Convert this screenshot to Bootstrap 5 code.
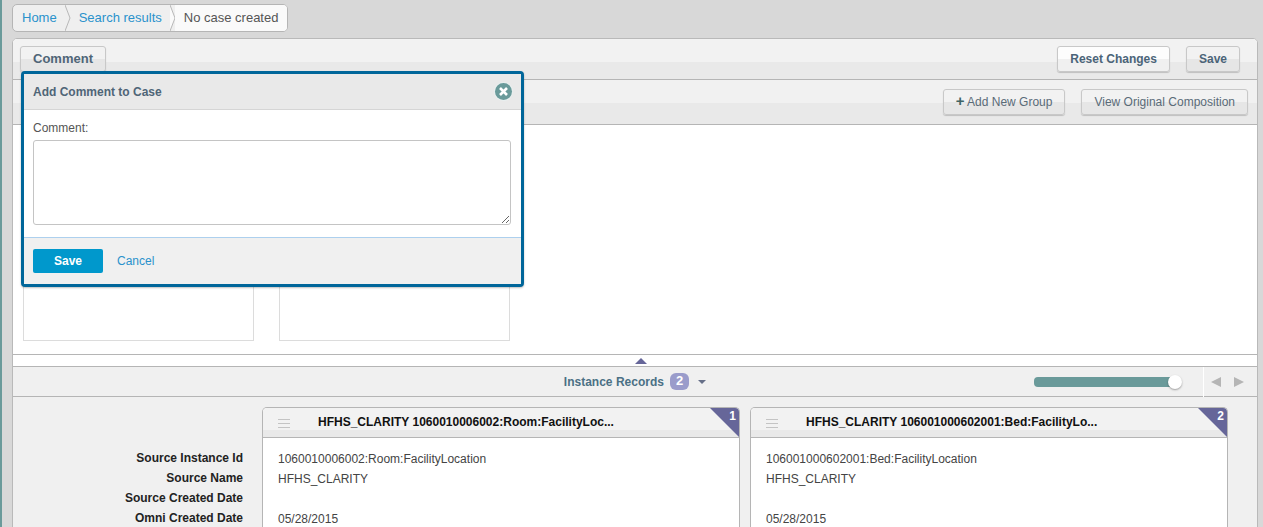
<!DOCTYPE html>
<html lang="en"><head><meta charset="utf-8"><title>No case created</title>
<link rel="stylesheet" href="https://cdn.jsdelivr.net/npm/bootstrap@5.3.0/dist/css/bootstrap.min.css">
<style>
html,body{height:527px;overflow:hidden}
body{background:#d8d8d8;font-family:"Liberation Sans",Arial,sans-serif;font-size:13px;color:#555;padding:4px 5px 0 12px;border-left:2px solid #6a9a9a;padding-left:10px;line-height:18px}
.crumbs{display:inline-flex;height:28px;border:1px solid #b5b5b5;border-radius:5px;background:#efefef;overflow:hidden;align-items:center}
.crumbs a,.link-blue{color:#2a92cc;text-decoration:none}
.crumb-item{height:100%;display:flex;align-items:center;padding:0 9px 0 9px;position:relative}
.crumb-sep{width:6px;height:100%;flex:none;margin:0 -1px}
.crumb-last{background:#fafafa;color:#555;padding-right:9px;flex:1}
.shell{position:relative;margin-top:6px;background:#fff;border:1px solid #b9b9b9;border-radius:5px 5px 0 0;height:500px;overflow:hidden}
.bar-top{height:41px;padding:7px 17px 0 7px;background:linear-gradient(#f2f2f2 0,#f2f2f2 23px,#e9e9e9 23px);border-bottom:1px solid #b5b5b5}
.bar-sub{height:45px;padding:9px 9px 0 18px;background:linear-gradient(#f1f1f1 0,#f1f1f1 23px,#e9e9e9 23px);border-bottom:1px solid #b5b5b5;color:#666;font-size:12px}
.tool-btn{height:26px;padding:0 12px;border:1px solid #c8c8c8;border-radius:3px;background:linear-gradient(#f2f2f2 50%,#e6e6e6 50%);box-shadow:0 1px 1px rgba(0,0,0,.18);color:#4b6478;font-size:12px;font-weight:700;line-height:24px}
.tool-light{background:linear-gradient(#fdfdfd 50%,#f0f0f0 50%)}
.tool-plain{font-weight:400;color:#5a6b78}
.tool-comment{font-size:13px;color:#4f6577;width:86px;padding:0}
.plus{color:#3f6464;font-weight:700;font-size:15px;line-height:1}
.canvas{height:230px;padding-left:10px;border-bottom:1px solid #b5b5b5;align-items:flex-end;padding-bottom:13px;gap:25px}
.group-box{width:231px;height:200px;border:1px solid #dcdcdc;background:#fff}
.grip-row{height:12px;background:#fff;border-bottom:1px solid #b5b5b5;position:relative}
.grip-tri{position:absolute;left:622px;top:3px;width:0;height:0;border-left:6px solid transparent;border-right:6px solid transparent;border-bottom:6px solid #666699}
.inst-bar{height:30px;background:#f0f0f0;border-bottom:1px solid #b5b5b5;position:relative}
.inst-title{color:#4b7085;font-weight:700;font-size:12px}
.inst-count{background:#9a9ccb;color:#fff;border-radius:6px;padding:0 6px;font-size:13px;line-height:16px;font-weight:700;margin-left:6px;height:17px}
.caret-down{width:0;height:0;border-left:4px solid transparent;border-right:4px solid transparent;border-top:4px solid #666f88;margin-left:9px}
.slide-track{position:absolute;left:1021px;top:10px;width:141px;height:10px;background:#6a9a9a;border-radius:4px}
.slide-knob{position:absolute;right:-7px;top:-2px;width:14px;height:14px;background:#fff;border-radius:50%;box-shadow:0 1px 2px rgba(0,0,0,.35)}
.pager{position:absolute;left:1190px;top:0;height:30px;border-left:1px solid #fff;width:50px;padding-left:7px;gap:13px}
.tri-l,.tri-r{width:0;height:0;border-top:5px solid transparent;border-bottom:5px solid transparent}
.tri-l{border-right:10px solid #b5b5b5}.tri-r{border-left:10px solid #b5b5b5}
.records{background:#f0f0f0;height:130px;padding:10px 0 0 0;position:relative}
.rec-labels{width:230px;padding-top:41px;text-align:right;font-weight:700;color:#222;font-size:12px;line-height:20px;margin-right:19px;flex:none}
.rec-card{width:478px;height:120px;border:1px solid #b5b5b5;border-bottom:0;border-radius:5px 5px 0 0;background:#fff;margin-right:10px;position:relative;overflow:hidden;flex:none}
.rec-head{height:30px;background:linear-gradient(#f2f2f2 22px,#e9e9e9 22px);border-bottom:1px solid #b5b5b5;position:relative;font-weight:700;font-size:12px;color:#111;line-height:28px;padding-left:55px}
.rec-menu{position:absolute;left:15px;top:11px;width:12px;height:9px;border-top:1px solid #c4c4c4;border-bottom:1px solid #c4c4c4}
.rec-menu::after{content:"";display:block;height:1px;margin-top:3px;background:#c4c4c4}
.rec-corner{position:absolute;right:0;top:0;width:0;height:0;border-top:29px solid #666699;border-left:29px solid transparent}
.rec-num{position:absolute;right:3px;top:1px;color:#fff;font-weight:700;font-size:12px;line-height:14px}
.rec-body{padding:11px 15px;font-size:12px;line-height:20px;color:#444}
.rec-body div{height:20px}
.pop{position:absolute;left:8px;top:32px;width:503px;height:216px;border:3px solid #00669a;border-radius:4px;background:#fff;box-shadow:0 1px 2px rgba(0,0,0,.25);z-index:5}
.pop-head{height:36px;background:#e9e9e9;border-bottom:1px solid #d5d5d5;padding:0 9px 0 9px;color:#4f6577;font-weight:700;font-size:12px}
.pop-x{width:17px;height:17px;border-radius:50%;background:#6a9a9a;display:flex;align-items:center;justify-content:center;box-shadow:0 0 0 1px #e9f0f0}
.pop-body{height:128px;padding:9px 9px 0;font-size:12px;color:#555;border-bottom:1px solid #add0ee}
.pop-text{width:478px;height:85px;border:1px solid #c4c4c4;border-radius:3px;margin-top:3px;display:block;resize:both;background:#fff}
.pop-foot{height:46px;background:#f0f0f0;padding:0 9px 0;gap:14px}
.btn-blue{width:70px;height:24px;padding:0;border:0;border-radius:2px;background:#0098cc;color:#fff;font-weight:700;font-size:12px}
</style></head>
<body>
<nav class="crumbs" aria-label="breadcrumb">
<a class="crumb-item" href="#">Home</a>
<svg class="crumb-sep" viewBox="0 0 6 28" preserveAspectRatio="none"><path d="M0 0 5 14 0 28" fill="none" stroke="#b5b5b5"/></svg>
<a class="crumb-item" href="#">Search results</a>
<svg class="crumb-sep" viewBox="0 0 6 28" preserveAspectRatio="none"><path d="M0 0 5 14 0 28" fill="#fafafa" stroke="#b5b5b5"/></svg>
<span class="crumb-item crumb-last">No case created</span>
</nav>
<div class="shell">
<div class="bar-top d-flex align-items-start">
<button class="tool-btn tool-comment" type="button">Comment</button>
<div class="ms-auto d-flex gap-3 me-0">
<button class="tool-btn tool-light" type="button">Reset Changes</button>
<button class="tool-btn" type="button">Save</button>
</div>
</div>
<div class="bar-sub d-flex align-items-start">
<span class="mt-2 flex-grow-1">Drag records between groups to change the composition.</span>
<button class="tool-btn tool-plain me-3" type="button"><span class="plus">+</span> Add New Group</button>
<button class="tool-btn tool-plain" type="button">View Original Composition</button>
</div>
<div class="canvas d-flex">
<div class="group-box"></div>
<div class="group-box"></div>
</div>
<div class="grip-row"><span class="grip-tri"></span></div>
<div class="inst-bar d-flex align-items-center justify-content-center">
<span class="inst-title">Instance Records</span><span class="inst-count">2</span><span class="caret-down"></span>
<div class="slide-track"><span class="slide-knob"></span></div>
<div class="pager d-flex align-items-center"><span class="tri-l"></span><span class="tri-r"></span></div>
</div>
<div class="records d-flex">
<div class="rec-labels">Source Instance Id<br>Source Name<br>Source Created Date<br>Omni Created Date</div>
<div class="rec-card">
<div class="rec-head"><span class="rec-menu"></span>HFHS_CLARITY 1060010006002:Room:FacilityLoc...<span class="rec-corner"></span><span class="rec-num">1</span></div>
<div class="rec-body"><div>1060010006002:Room:FacilityLocation</div><div>HFHS_CLARITY</div><div></div><div>05/28/2015</div></div>
</div>
<div class="rec-card">
<div class="rec-head"><span class="rec-menu"></span>HFHS_CLARITY 106001000602001:Bed:FacilityLo...<span class="rec-corner"></span><span class="rec-num">2</span></div>
<div class="rec-body"><div>106001000602001:Bed:FacilityLocation</div><div>HFHS_CLARITY</div><div></div><div>05/28/2015</div></div>
</div>
</div>
<div class="pop">
<div class="pop-head d-flex align-items-center justify-content-between">
<span>Add Comment to Case</span>
<span class="pop-x"><svg width="11" height="11" viewBox="0 0 11 11"><path d="M2 2 9 9M9 2 2 9" stroke="#fff" stroke-width="2.6"/></svg></span>
</div>
<div class="pop-body">Comment:<textarea class="pop-text" aria-label="Comment"></textarea></div>
<div class="pop-foot d-flex align-items-center">
<button class="btn-blue" type="button">Save</button>
<a class="link-blue" href="#" style="font-size:12px">Cancel</a>
</div>
</div>
</div>
</body></html>
